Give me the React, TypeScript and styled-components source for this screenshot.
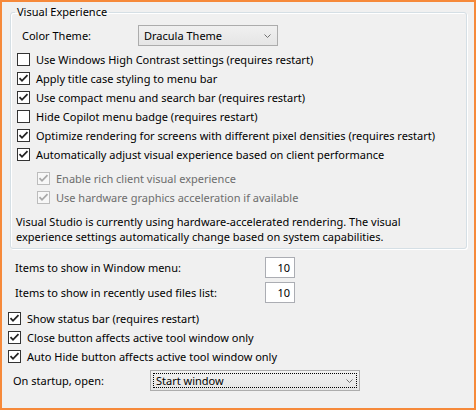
import React from "react";
import styled, { createGlobalStyle } from "styled-components";

const GlobalStyle = createGlobalStyle`
  html, body { margin: 0; padding: 0; background: #f0f0f0; }
  body {
    font-family: "Segoe UI", "Noto Sans", sans-serif;
    font-size: 11px;
    line-height: 15px;
    color: #000;
  }
  * { box-sizing: border-box; }
`;

const Window = styled.div`
  width: 476px;
  height: 410px;
  border: 2px solid #f6893a;
  background: #f0f0f0;
  padding-top: 2px;
  display: flex;
  flex-direction: column;
`;

const Group = styled.fieldset`
  margin: 0 7px 0 8px;
  padding: 0;
  min-width: 0;
  border: 1px solid #d5dfe5;
  border-radius: 3px;
  box-shadow: inset 1px 1px 0 #fff, 1px 1px 0 #fff;
`;

const Legend = styled.legend`
  margin-left: 4px;
  padding: 0 2px;
  line-height: 16px;
`;

const GroupBody = styled.div`
  padding: 5px 0 4px 0;
  display: flex;
  flex-direction: column;
`;

const FieldRow = styled.div<{ $indent: number; $labelWidth: number; $mt?: number }>`
  display: flex;
  align-items: center;
  height: 21px;
  padding-left: ${(p) => p.$indent}px;
  margin-top: ${(p) => p.$mt ?? 0}px;
  & > label {
    width: ${(p) => p.$labelWidth}px;
    flex: none;
    white-space: nowrap;
  }
`;

const Combo = styled.div<{ $width: number; $focused?: boolean }>`
  position: relative;
  width: ${(p) => p.$width}px;
  height: 21px;
  border: 1px solid #acacac;
  background: linear-gradient(#f0f0f0, #e5e5e5);
  display: flex;
  align-items: center;
  padding: 0 6px 0 5px;
  justify-content: space-between;
  ${(p) =>
    p.$focused
      ? `&::after {
    content: "";
    position: absolute;
    inset: 2px;
    border: 1px dotted #000;
    pointer-events: none;
  }`
      : ""}
`;

const Chevron = () => (
  <svg width="7" height="4" viewBox="0 0 7 4">
    <polyline points="0.5,0.5 3.5,3.5 6.5,0.5" fill="none" stroke="#707070" strokeWidth="1" />
  </svg>
);

const CheckList = styled.div<{ $indent: number; $mt?: number }>`
  display: flex;
  flex-direction: column;
  padding-left: ${(p) => p.$indent}px;
  margin-top: ${(p) => p.$mt ?? 0}px;
`;

const CheckRow = styled.div<{ $disabled?: boolean }>`
  display: flex;
  align-items: center;
  height: 19px;
  gap: 6px;
  white-space: nowrap;
  color: ${(p) => (p.$disabled ? "#6d6d6d" : "#000")};
`;

const Box = styled.span<{ $disabled?: boolean }>`
  width: 13px;
  height: 13px;
  flex: none;
  border: 1px solid ${(p) => (p.$disabled ? "#bcbcbc" : "#333")};
  background: ${(p) => (p.$disabled ? "#f7f7f7" : "#fff")};
  display: flex;
  align-items: center;
  justify-content: center;
`;

const Check = ({ checked, disabled, label }: { checked: boolean; disabled?: boolean; label: string }) => (
  <CheckRow $disabled={disabled}>
    <Box $disabled={disabled}>
      {checked && (
        <svg width="11" height="11" viewBox="0 0 11 11">
          <polyline
            points="1.5,5.2 4,7.8 9.5,2.2"
            fill="none"
            stroke={disabled ? "#a8a8a8" : "#222"}
            strokeWidth="1.8"
          />
        </svg>
      )}
    </Box>
    <span>{label}</span>
  </CheckRow>
);

const Note = styled.p`
  margin: 7px 0 0 5px;
  line-height: 15px;
`;

const NumberBox = styled.div`
  width: 30px;
  height: 21px;
  border: 1px solid #abadb3;
  background: #fff;
  text-align: right;
  padding-right: 4px;
  line-height: 19px;
`;

const Lower = styled.div`
  display: flex;
  flex-direction: column;
  margin-top: 8px;
`;

export default function App() {
  return (
    <>
      <GlobalStyle />
      <Window>
        <Group>
          <Legend>Visual Experience</Legend>
          <GroupBody>
            <FieldRow $indent={11} $labelWidth={116}>
              <label>Color Theme:</label>
              <Combo $width={140}>
                <span>Dracula Theme</span>
                <Chevron />
              </Combo>
            </FieldRow>
            <CheckList $indent={6} $mt={4}>
              <Check checked={false} label="Use Windows High Contrast settings (requires restart)" />
              <Check checked label="Apply title case styling to menu bar" />
              <Check checked label="Use compact menu and search bar (requires restart)" />
              <Check checked={false} label="Hide Copilot menu badge (requires restart)" />
              <Check checked label="Optimize rendering for screens with different pixel densities (requires restart)" />
              <Check checked label="Automatically adjust visual experience based on client performance" />
            </CheckList>
            <CheckList $indent={26} $mt={5}>
              <Check checked disabled label="Enable rich client visual experience" />
              <Check checked disabled label="Use hardware graphics acceleration if available" />
            </CheckList>
            <Note>
              Visual Studio is currently using hardware-accelerated rendering. The visual
              <br />
              experience settings automatically change based on system capabilities.
            </Note>
          </GroupBody>
        </Group>
        <Lower>
          <FieldRow $indent={13} $labelWidth={250}>
            <label>Items to show in Window menu:</label>
            <NumberBox>10</NumberBox>
          </FieldRow>
          <FieldRow $indent={13} $labelWidth={250} $mt={4}>
            <label>Items to show in recently used files list:</label>
            <NumberBox>10</NumberBox>
          </FieldRow>
          <CheckList $indent={6} $mt={6}>
            <Check checked label="Show status bar (requires restart)" />
            <Check checked label="Close button affects active tool window only" />
            <Check checked label="Auto Hide button affects active tool window only" />
          </CheckList>
          <FieldRow $indent={11} $labelWidth={137} $mt={4}>
            <label>On startup, open:</label>
            <Combo $width={210} $focused>
              <span>Start window</span>
              <Chevron />
            </Combo>
          </FieldRow>
        </Lower>
      </Window>
    </>
  );
}
